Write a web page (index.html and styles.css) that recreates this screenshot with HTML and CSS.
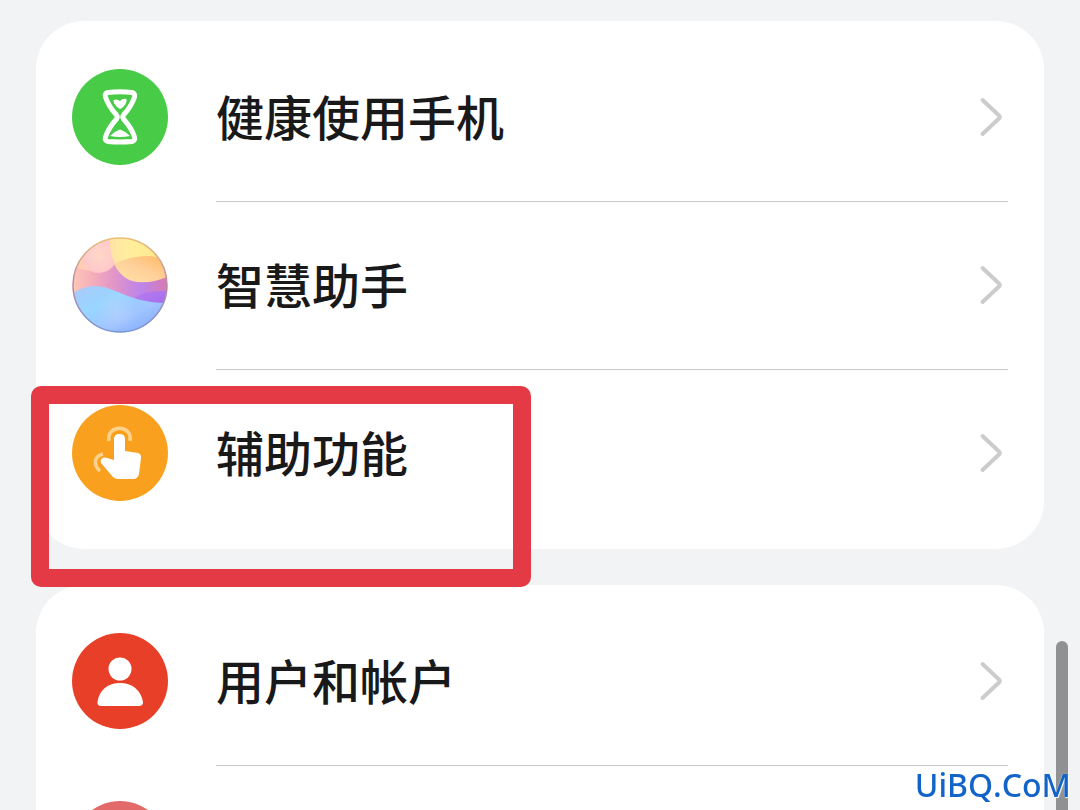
FILE: index.html
```
<!DOCTYPE html>
<html lang="zh-CN">
<head>
  <meta charset="UTF-8">
  <meta name="viewport" content="width=device-width, initial-scale=1.0">
  <title>设置</title>
  <link rel="stylesheet" href="styles.css">
</head>
<body>
  <svg class="defs" width="0" height="0" aria-hidden="true">
    <symbol id="chevron" viewBox="0 0 36 48">
      <path d="M10.500 7 L27 22.500 Q28.500 24 27 25.500 L10.500 41" fill="none" stroke="#cccccc" stroke-width="4" stroke-linecap="round" stroke-linejoin="round"/>
    </symbol>
  </svg>

  <main class="settings">
    <nav class="card">
      <a class="row" href="#health">
        <svg class="icon" viewBox="0 0 96 96" aria-hidden="true">
          <circle cx="48" cy="48" r="48" fill="#48cb46"/>
          <path d="M36 23.500 Q48 22 60 23.500 Q63.500 24.500 62.500 28 C60 36 56 41 51.500 46 Q50 48 51.500 50 C56 55 60 60 62.500 68 Q63.500 71.500 60 72.500 Q48 73.500 36 72.500 Q32.500 71.500 33.500 68 C36 60 40 55 44.500 50 Q46 48 44.500 46 C40 41 36 36 33.500 28 Q32.500 24.500 36 23.500Z" fill="none" stroke="#fff" stroke-width="5" stroke-linejoin="round"/>
          <path d="M41.500 31 Q45 29.500 48 32 Q51 29 54.500 30 Q55 34 52 37 Q50 39.500 48 40 Q46 39 44 37 Q41 34 41.500 31Z M38 67 Q42 62.500 48 60.500 Q54 62.500 58 67 Q48 69 38 67Z" fill="#fff"/>
        </svg>
        <span class="label">健康使用手机</span>
        <svg class="arrow" aria-hidden="true"><use href="#chevron"/></svg>
      </a>
      <a class="row" href="#assistant">
        <svg class="icon" viewBox="0 0 96 96" aria-hidden="true">
          <defs>
            <clipPath id="ball"><circle cx="48" cy="48" r="47"/></clipPath>
            <linearGradient id="sky" x1="0" y1="0" x2="1" y2="0">
              <stop offset="0" stop-color="#ffc8b8"/>
              <stop offset=".4" stop-color="#ffdcae"/>
              <stop offset=".6" stop-color="#fff09a"/>
              <stop offset="1" stop-color="#ffe57c"/>
            </linearGradient>
            <linearGradient id="pink" x1="0" y1="0" x2="1" y2="0">
              <stop offset="0" stop-color="#ffc8b8"/>
              <stop offset=".22" stop-color="#f5acba"/>
              <stop offset=".45" stop-color="#e094c8"/>
              <stop offset=".72" stop-color="#bc84ea"/>
              <stop offset="1" stop-color="#d87ab0"/>
            </linearGradient>
            <linearGradient id="orange" x1="0" y1="1" x2="1" y2="0">
              <stop offset="0" stop-color="#ffe3a8"/>
              <stop offset=".5" stop-color="#ffd09a"/>
              <stop offset="1" stop-color="#ffb860"/>
            </linearGradient>
            <linearGradient id="purple" x1="0" y1="0" x2="1" y2="1">
              <stop offset="0" stop-color="#b87cf0"/>
              <stop offset="1" stop-color="#a26cee"/>
            </linearGradient>
            <linearGradient id="water" x1="0" y1="0" x2="1" y2="1">
              <stop offset="0" stop-color="#acc8fa"/>
              <stop offset=".35" stop-color="#98d6ff"/>
              <stop offset=".62" stop-color="#a0c4ff"/>
              <stop offset="1" stop-color="#78a4fb"/>
            </linearGradient>
            <radialGradient id="haze">
              <stop offset="0" stop-color="#ffd8c8"/>
              <stop offset="1" stop-color="#ffc8ca"/>
            </radialGradient>
            <radialGradient id="glow">
              <stop offset="0" stop-color="#bcd4fc" stop-opacity=".6"/>
              <stop offset="1" stop-color="#bcd4fc" stop-opacity="0"/>
            </radialGradient>
            <linearGradient id="rim" x1="0" y1="0" x2="0" y2="1">
              <stop offset="0" stop-color="#e8c078"/>
              <stop offset=".5" stop-color="#b888ab"/>
              <stop offset="1" stop-color="#7796d2"/>
            </linearGradient>
          </defs>
          <g clip-path="url(#ball)">
            <rect width="96" height="96" fill="url(#sky)"/>
            <path d="M0 28 Q20 40 42 26 Q67 56 96 38 V75 H0Z" fill="url(#pink)"/>
            <path d="M11 22 Q14 36 27 36 Q39 35 43 26 Q37 15 38 0 H11Z" fill="url(#haze)"/>
            <path d="M38 0 Q37 16 43 27 Q56 20 77 19 V0Z" fill="#ffec9e" opacity=".5"/>
            <path d="M42 27 Q58 19 77 19 Q91 20 97 29 V39 Q82 46 65 45 Q50 43 42 27Z" fill="url(#orange)"/>
            <path d="M63 61 Q72 53 96 54 V68 H66Z" fill="url(#purple)"/>
            <path d="M0 57 Q11 49 23 49 C43 49 56 66 96 66 V96 H0Z" fill="url(#water)"/>
            <circle cx="44" cy="74" r="20" fill="url(#glow)"/>
          </g>
          <circle cx="48" cy="48" r="47" fill="none" stroke="url(#rim)" stroke-width="1.500"/>
        </svg>
        <span class="label">智慧助手</span>
        <svg class="arrow" aria-hidden="true"><use href="#chevron"/></svg>
      </a>
      <a class="row" href="#accessibility">
        <svg class="icon" viewBox="0 0 96 96" aria-hidden="true">
          <circle cx="48" cy="48" r="48" fill="#f9a11f"/>
          <path d="M37 36 C34 19 61 19 58 36 M31 49 C22 51 21 60 28 66" fill="none" stroke="#ffd28b" stroke-width="3.500"/>
          <path d="M42 34 Q42 29 47.500 29 Q53 29 53 34 V46 L66 48 Q69.500 49 69 53 L67 69 Q66 74 61 74 H46 Q43 74 41 72 L29 58 Q28 55 30 53.500 Q32 52 35 53 L42 55Z" fill="#fff"/>
        </svg>
        <span class="label">辅助功能</span>
        <svg class="arrow" aria-hidden="true"><use href="#chevron"/></svg>
      </a>
      <div class="highlight"></div>
    </nav>

    <nav class="card">
      <a class="row" href="#users">
        <svg class="icon" viewBox="0 0 96 96" aria-hidden="true">
          <circle cx="48" cy="48" r="48" fill="#e84028"/>
          <circle cx="48" cy="36" r="11.500" fill="#fff"/>
          <path d="M25.500 69 C27 57 36 50 48 50 S69 57 71 69 Q71 73 67 73 H29 Q25 73 25.500 69Z" fill="#fff"/>
        </svg>
        <span class="label">用户和帐户</span>
        <svg class="arrow" aria-hidden="true"><use href="#chevron"/></svg>
      </a>
      <div class="row">
        <svg class="icon" viewBox="0 0 96 96" aria-hidden="true">
          <circle cx="48" cy="48" r="48" fill="#e26b69"/>
        </svg>
      </div>
    </nav>
  </main>

  <div class="scrollbar"></div>
  <div class="watermark">UiBQ.CoM</div>
</body>
</html>
```
FILE: styles.css
```
* {
  box-sizing: border-box;
}

body {
  margin: 0;
  height: 100vh;
  overflow: hidden;
  background: #f1f3f5;
  color: #191919;
  font-family: "Noto Sans CJK SC", sans-serif;
}

.defs {
  position: absolute;
}

.settings {
  display: flex;
  flex-direction: column;
  gap: 36px;
  height: 100%;
  padding: 21px 36px 0;
  overflow: hidden;
}

.card {
  position: relative;
  flex: none;
  padding: 12px 36px;
  background: #fff;
  border-radius: 48px;
}

.row {
  display: grid;
  grid-template-columns: 96px 1fr 36px;
  column-gap: 48px;
  align-items: center;
  height: 168px;
  color: inherit;
  text-decoration: none;
  /* divider starts at the label, not under the icon */
  background: linear-gradient(#c8c8c8, #c8c8c8) 144px 0 / 100% 1px no-repeat;
}

.row:first-child {
  background: none;
}

.icon {
  width: 96px;
  height: 96px;
}

.label {
  padding-bottom: 4px;
  font-size: 48px;
  font-weight: 500;
  line-height: 72px;
}

.arrow {
  width: 36px;
  height: 48px;
}

.highlight {
  position: absolute;
  top: 365px;
  left: -5px;
  width: 500px;
  height: 201px;
  border: 18px solid #e33a46;
  border-radius: 10px;
  z-index: 1;
  pointer-events: none;
}

.scrollbar {
  position: fixed;
  top: 641px;
  right: 12px;
  bottom: 0;
  width: 12px;
  border-radius: 6px 6px 0 0;
  background: #909193;
}

.watermark {
  position: fixed;
  right: 9px;
  bottom: 3px;
  color: #1264c8;
  font-family: "Noto Sans", "Open Sans", sans-serif;
  font-size: 32px;
  font-weight: 500;
  font-kerning: none;
  line-height: 44px;
  text-shadow: 0 0 1px #fff, 1px 1px 1px #fff;
}
```
